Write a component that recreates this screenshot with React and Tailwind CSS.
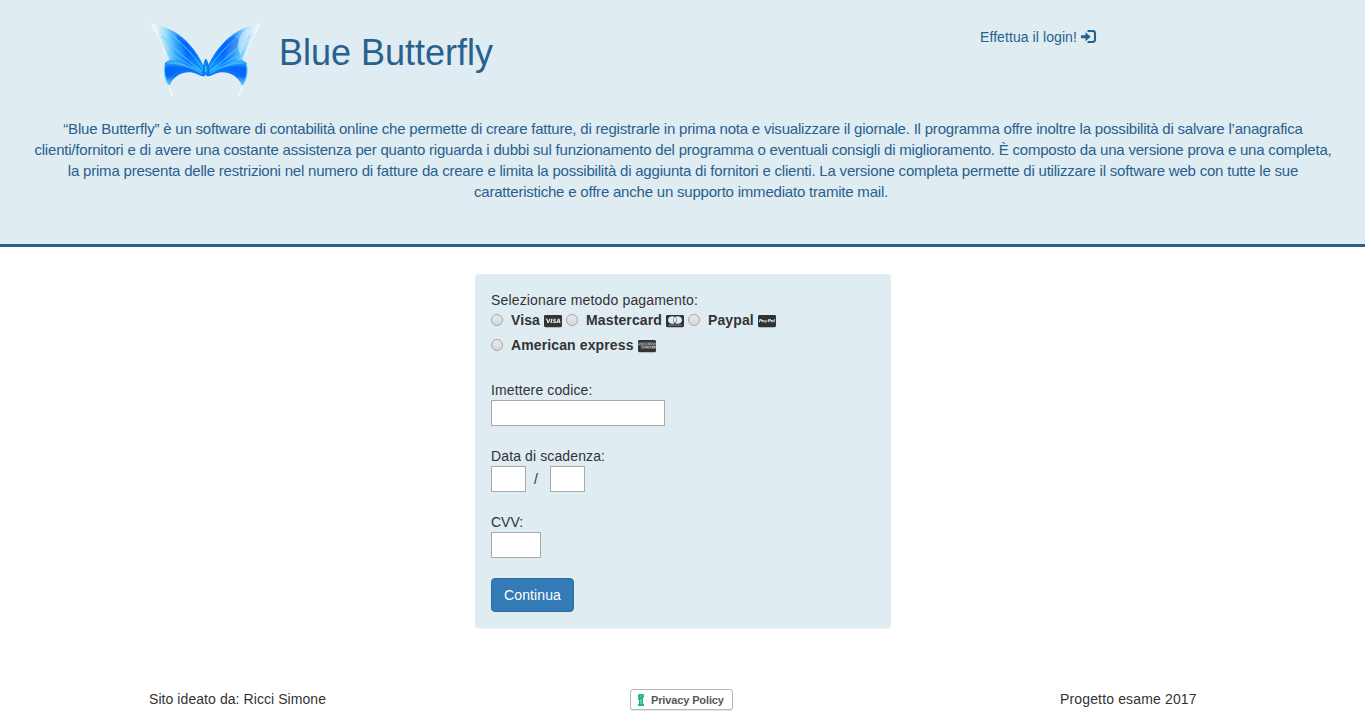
import React from "react";
import { FaCcVisa, FaCcMastercard, FaCcPaypal, FaCcAmex } from "react-icons/fa";

function Butterfly() {
  return (
    <svg className="block h-[76px] w-[114px]" viewBox="0 0 114 76">
      <defs>
        <linearGradient id="upper" gradientUnits="userSpaceOnUse" x1="8" y1="26" x2="46" y2="24">
          <stop offset="0" stopColor="#e9f5fb" />
          <stop offset="0.25" stopColor="#9edcfa" />
          <stop offset="0.5" stopColor="#35a4fb" />
          <stop offset="0.8" stopColor="#0a6cff" />
          <stop offset="1" stopColor="#0a8afb" />
        </linearGradient>
        <linearGradient id="lower" gradientUnits="userSpaceOnUse" x1="28" y1="37" x2="24" y2="66">
          <stop offset="0" stopColor="#4cc6fa" />
          <stop offset="0.35" stopColor="#0a78fa" />
          <stop offset="0.62" stopColor="#0a72fa" />
          <stop offset="1" stopColor="#6fd2fa" />
        </linearGradient>
        <filter id="soft" x="-10%" y="-10%" width="120%" height="120%">
          <feGaussianBlur stdDeviation="0.75" />
        </filter>
        <g id="wing">
          <path d="M2 2C10 5 17 6 24 10C31 14 36 18 40 23C46 29 52 38 56.5 50L53 54C42 51 32 48 24 44C17 38 17 32 15 27C12 19 6 11 2 2Z" fill="url(#upper)" />
          <path d="M16 42C20 37 27 39 34 42C41 46 50 49 56 50V55C53 56 50 54 47 52.5C41 50 33 51 28 55C23 59 21 62 21 66C16 60 14 51 16 42Z" fill="url(#lower)" />
          <path d="M27 14C38 20 47 31 51 43C43 38 33 29 27 14Z" fill="#005cff" opacity=".6" />
          <path d="M16 47C26 42 37 46 46 50C35 48 26 50 19 58C17 54 16 51 16 47Z" fill="#0060ff" opacity=".55" />
          <path d="M13 15C24 26 37 39 53 50M19 31C31 38 42 45 53 51M18 42C31 41 44 47 53 53M24 15C35 24 46 36 54 48" fill="none" stroke="#45dcff" strokeWidth="1.2" opacity=".6" />
          <path d="M2 2C6 11 11 17 14 25C16 31 17 35 20 38" fill="none" stroke="#f3fbff" strokeWidth="2" opacity=".55" />
          <path d="M16 43C14 51 16 60 20 65" fill="none" stroke="#7ce2fa" strokeWidth="1.2" opacity=".8" />
          <path d="M20 64C21 69 22 72 24 75" fill="none" stroke="#f3fbff" strokeWidth="1.6" opacity=".8" />
        </g>
      </defs>
      <g filter="url(#soft)">
        <use href="#wing" />
        <use href="#wing" transform="translate(113.5 0) scale(-1 1)" />
        <path d="M109 4C101 12 96 20 92 34C88 29 88 19 93 12C98 7 104 5 109 4Z" fill="#e0effc" opacity=".55" />
        <path d="M82 17C90 14 91 18 88 25C85 30 81 32 77 31C80 26 81 22 82 17Z" fill="#496cf0" opacity=".4" />
        <path d="M56.7 38C60 43 61 51 58 54C55 54 53 46 56.7 38Z" fill="#0787ed" stroke="#0474dc" />
        <path d="M56.7 45V51" stroke="#31bdfc" strokeWidth="1.6" />
      </g>
    </svg>
  );
}

function LoginIcon() {
  return (
    <svg className="ml-1 h-[14px] w-[16px]" viewBox="0 0 16 14">
      <path d="M0 5.2H4.5V2.2L9.7 6.7L4.5 11.2V8.2H0Z" fill="#286090" />
      <path d="M6.5 1H11.6Q14 1 14 3.4V9.6Q14 12 11.6 12H6.5" fill="none" stroke="#286090" strokeWidth="2.1" />
    </svg>
  );
}

function Method({ label, Icon }) {
  return (
    <label className="mr-1 flex h-[25px] items-center">
      <span className="h-3 w-3 shrink-0 rounded-full border border-[#a5a5a5] bg-linear-to-b from-[#e9e9e9] to-[#d9d9d9]" />
      <span className="ml-2 text-[14px] font-bold tracking-[0.12px] whitespace-nowrap">{label}</span>
      <Icon preserveAspectRatio="none" className="mt-0.5 ml-1 h-[14px] w-[18px] shrink-0" />
    </label>
  );
}

const box = "block h-[26px] border border-[#a9a9a9] bg-white outline-none";

export default function App() {
  return (
    <div className="flex h-[728px] w-[1365px] flex-col overflow-hidden bg-white font-['Liberation_Sans',Arial,sans-serif] text-[14px] leading-5 text-[#333]">
      <header className="h-[247px] shrink-0 border-b-3 border-[#286090] bg-[#dfecf1] text-[#286090]">
        <div className="flex h-[118px] items-start">
          <div className="mt-[21px] ml-[149px]"><Butterfly /></div>
          <h1 className="mt-[33px] ml-[16px] w-[215px] text-[36px] leading-10 whitespace-nowrap">Blue Butterfly</h1>
          <a className="mt-[27px] ml-[486px] flex items-center whitespace-nowrap"><span className="w-[97px] tracking-[0.08px]">Effettua il login!</span><LoginIcon /></a>
        </div>
        <p className="pl-px text-center text-[15px] leading-[21px] tracking-[-0.206px] whitespace-nowrap">
          “Blue Butterfly” è un software di contabilità online che permette di creare fatture, di registrarle in prima nota e visualizzare il giornale. Il programma offre inoltre la possibilità di salvare l’anagrafica<br />
          clienti/fornitori e di avere una costante assistenza per quanto riguarda i dubbi sul funzionamento del programma o eventuali consigli di miglioramento. È composto da una versione prova e una completa,<br />
          la prima presenta delle restrizioni nel numero di fatture da creare e limita la possibilità di aggiunta di fornitori e clienti. La versione completa permette di utilizzare il software web con tutte le sue<br />
          <span className="mr-1">caratteristiche e offre anche un supporto immediato tramite mail.</span>
        </p>
      </header>

      <main className="mt-[27px] ml-[475px] h-[354px] w-[416px] shrink-0 rounded bg-[#dfecf1] px-4 pt-4 shadow-[0_1px_1px_rgba(0,0,0,0.05)]">
        <p className="tracking-[0.16px]">Selezionare metodo pagamento:</p>
        <div className="-mt-[3px] flex">
          <Method label="Visa" Icon={FaCcVisa} />
          <Method label="Mastercard" Icon={FaCcMastercard} />
          <Method label="Paypal" Icon={FaCcPaypal} />
        </div>
        <Method label="American express" Icon={FaCcAmex} />
        <p className="mt-[23px] tracking-[0.12px]">Imettere codice:</p>
        <input aria-label="Codice" className={`${box} w-[174px]`} />
        <p className="mt-5 tracking-[0.12px]">Data di scadenza:</p>
        <div className="flex items-center">
          <input aria-label="Mese" className={`${box} w-[35px]`} />
          <span className="w-6 pl-2">/</span>
          <input aria-label="Anno" className={`${box} w-[35px]`} />
        </div>
        <p className="mt-5">CVV:</p>
        <input aria-label="CVV" className={`${box} w-[50px]`} />
        <button className="mt-5 block h-[34px] w-[83px] rounded border border-[#2e6da4] bg-[#337ab7] tracking-[0.1px] text-white">Continua</button>
      </main>

      <footer className="mt-[61px] flex items-start">
        <span className="ml-[149px] w-[481px] tracking-[0.07px]">Sito ideato da: Ricci Simone</span>
        <a className="flex h-[21px] w-[103px] items-center rounded-[3px] border border-[#b8b8b8] bg-white pl-[7px] text-[11px] font-bold text-[#575757] shadow-[0_1px_1px_rgba(0,0,0,0.1)]">
          <svg className="h-3 w-[6px]" viewBox="0 0 6 12">
            <path d="M1 0H5L6 1V3L5 4V10H6V12H0V10H1V6H0V4H1L0 3V1Z" fill="#1cb77e" />
            <path d="M2.3 2H3.7M3 5V10" stroke="#c4eddf" strokeWidth="0.8" />
          </svg>
          <span className="ml-[7px] tracking-[-0.13px] whitespace-nowrap">Privacy Policy</span>
        </a>
        <span className="ml-[327px] tracking-[0.15px] whitespace-nowrap">Progetto esame 2017</span>
      </footer>
    </div>
  );
}
